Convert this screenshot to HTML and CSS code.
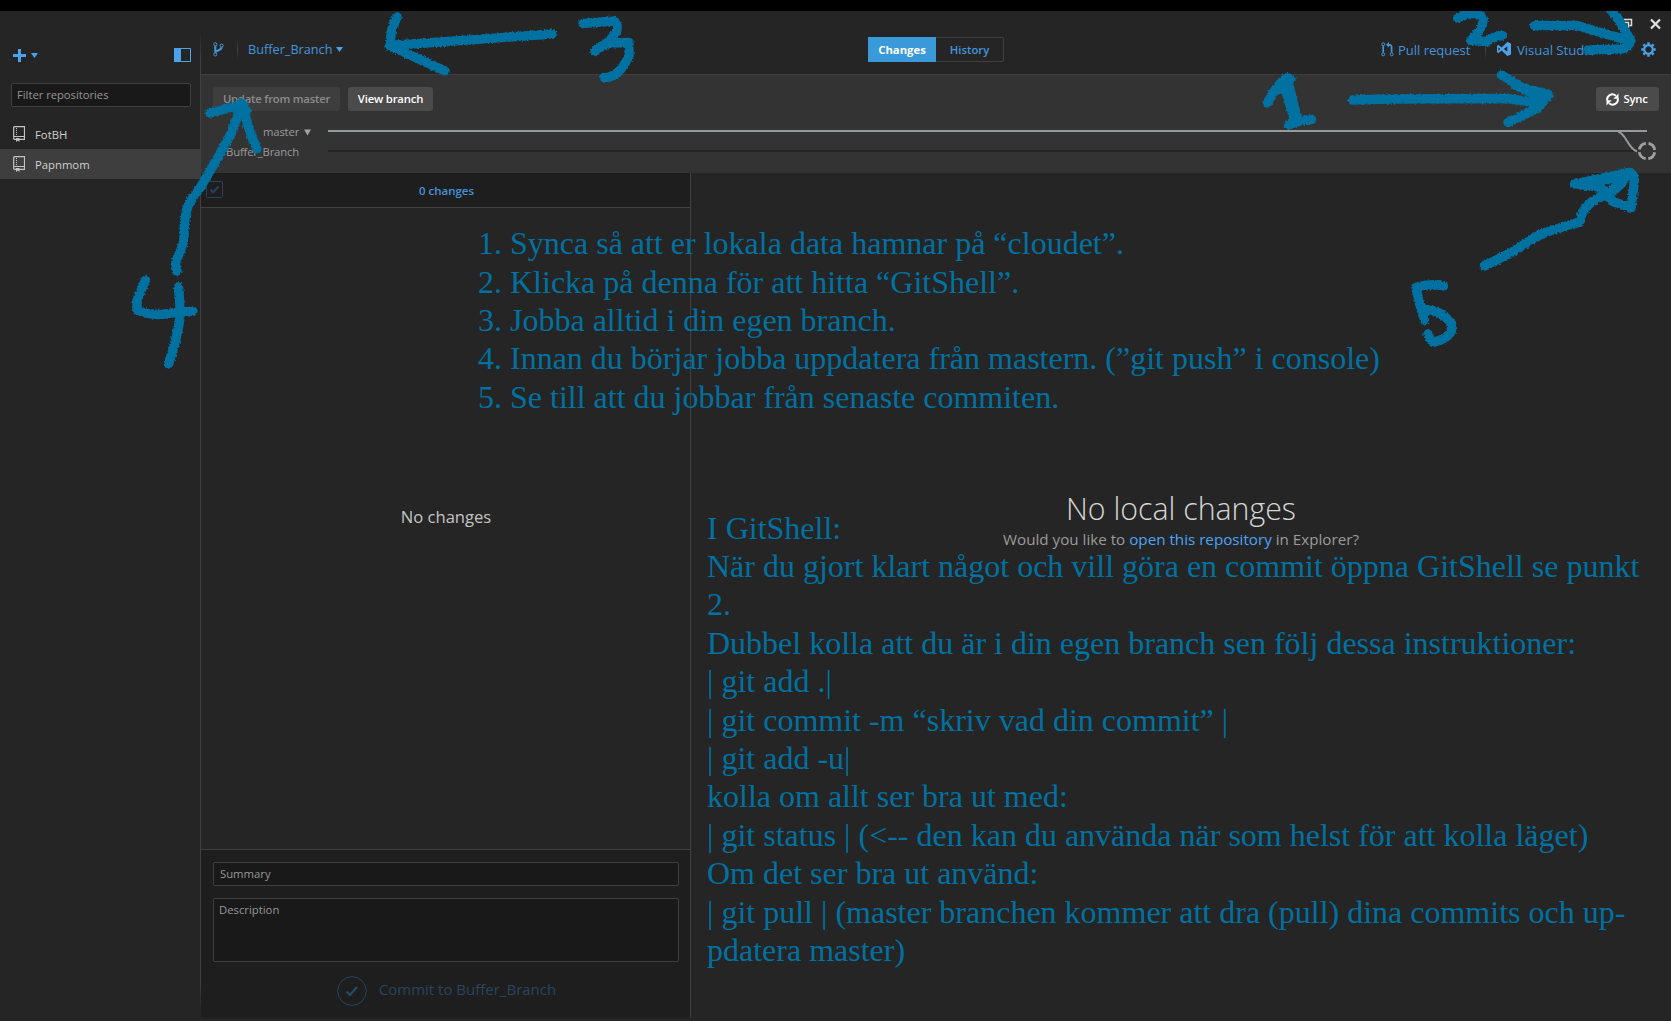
FILE: index.html
```html
<!DOCTYPE html>
<html lang="sv">
<head>
<meta charset="utf-8">
<title>GitHub</title>
<link rel="stylesheet" href="styles.css">
</head>
<body>
<div class="desktop">
  <div class="app">
    <aside class="sidebar">
      <div class="sidebar-tools">
        <span class="add"><svg width="13" height="13" viewBox="0 0 13 13"><path d="M5 0h3v5h5v3H8v5H5V8H0V5h5z" fill="#4ba3ea"/></svg><svg width="7" height="5" viewBox="0 0 7 5"><path d="M0 0h7L3.5 5z" fill="#4ba3ea"/></svg></span>
        <svg width="17" height="14" viewBox="0 0 17 14"><path d="M.5.5h16v13H.5z" fill="none" stroke="#4ba3ea"/><path d="M0 0h7v14H0z" fill="#4ba3ea"/></svg>
      </div>
      <div class="field filter">Filter repositories</div>
      <ul class="repos">
        <li><svg class="repo-icon" width="12" height="16" viewBox="0 0 12 16"><path d="M1.5.7h10v12.6h-10q-.8 0-.8-.8v-11q0-.8.8-.8M1 10.5h10.5" fill="none" stroke="#c4c4c4" stroke-width="1.2"/><path d="M3.5 2v7.5" stroke="#c4c4c4" stroke-dasharray="1 1"/><path d="M3 12h3.5v4l-1.7-1.5L3 16z" fill="#c4c4c4"/></svg><span>FotBH</span></li>
        <li class="selected"><svg class="repo-icon" width="12" height="16" viewBox="0 0 12 16"><path d="M1.5.7h10v12.6h-10q-.8 0-.8-.8v-11q0-.8.8-.8M1 10.5h10.5" fill="none" stroke="#c4c4c4" stroke-width="1.2"/><path d="M3.5 2v7.5" stroke="#c4c4c4" stroke-dasharray="1 1"/><path d="M3 12h3.5v4l-1.7-1.5L3 16z" fill="#c4c4c4"/></svg><span>Papnmom</span></li>
      </ul>
    </aside>

    <main class="main">
      <header class="header">
        <div class="branch">
          <svg width="11" height="15" viewBox="0 0 11 15"><g fill="none" stroke="#4494d6"><circle cx="2.3" cy="2.3" r="1.6"/><circle cx="2.3" cy="12.4" r="1.6"/><circle cx="8.6" cy="3.6" r="1.6"/><path d="M2.3 4v6.8M8.6 5.2c0 3.2-5 2.6-6 5" stroke-width="2.1"/></g></svg>
          <i class="divider"></i>
          <span class="branch-name">Buffer_Branch</span>
          <svg width="7" height="5" viewBox="0 0 7 5"><path d="M0 0h7L3.5 5z" fill="#4ba3ea"/></svg>
        </div>
        <div class="tabs"><span class="tab active">Changes</span><span class="tab">History</span></div>
        <div class="actions">
          <svg width="13" height="15" viewBox="0 0 13 15"><g fill="none" stroke="#4494d6"><circle cx="2.2" cy="2.3" r="1.5"/><circle cx="2.2" cy="12.3" r="1.5"/><circle cx="10.6" cy="12.3" r="1.5"/><path d="M2.2 4v6.6M10.6 10.6V5c0-1.5-.6-2.2-2.4-2.2H6.6" stroke-width="1.7"/></g><path d="M8 0v5.6L4.9 2.8z" fill="#4494d6"/></svg>
          <span class="pull">Pull request</span>
          <i class="divider"></i>
          <svg class="vs" width="14" height="14" viewBox="0 0 14 14"><path fill="#4ba3ea" fill-rule="evenodd" d="M10.3 0 14 1.4v11.2L10.3 14 4.7 8.5 1.4 11 0 10.3V3.7L1.4 3l3.3 2.5zM10.3 4.2 6.8 7l3.5 2.8zM1.4 5.3v3.4L3.2 7z"/></svg>
          <span class="studio">Visual Studio</span>
          <i class="divider"></i>
          <svg class="gear" width="15" height="15" viewBox="-7.5 -7.5 15 15"><circle r="4.3" fill="none" stroke="#4ba3ea" stroke-width="2.2"/><path d="M0-5v-2.2M0 5v2.2M-5 0h-2.2M5 0h2.2M-3.6-3.6l-1.5-1.5M3.6 3.6l1.5 1.5M-3.6 3.6l-1.5 1.5M3.6-3.6l1.5-1.5" stroke="#4ba3ea" stroke-width="2.5"/></svg>
        </div>
        <div class="window-buttons">
          <svg width="40" height="12" viewBox="0 0 40 12"><path d="M3.5 3.5V1.5h7v6h-2M1.5 4.5h6v5h-6z" fill="none" stroke="#ddd" stroke-width="1.5"/><path d="m30 1.5 9 9m0-9-9 9" stroke="#e2e2e2" stroke-width="2.2"/></svg>
        </div>
      </header>

      <section class="toolbar">
        <div class="buttons">
          <span class="button disabled">Update from master</span>
          <span class="button view">View branch</span>
          <span class="button sync"><svg width="13" height="13" viewBox="0 0 13 13"><path d="M1.3 7.6A5.1 5.1 0 0 1 9.8 2.8M11.7 5.4A5.1 5.1 0 0 1 3.2 10.2" fill="none" stroke="#fff" stroke-width="2"/><path d="M12.5.6v5.2H7.3zM.5 12.4V7.2h5.2z" fill="#fff"/></svg>Sync</span>
        </div>
        <div class="timeline">
          <div class="names">
            <span>master <svg width="7" height="7" viewBox="0 0 7 7"><path d="M0 .5h7L3.5 6.5z" fill="#a2a2a2"/></svg></span>
            <span>Buffer_Branch</span>
          </div>
          <svg class="graph" width="1340" height="44" viewBox="328 120 1340 44"><path d="M328 151h1307" stroke="#252525" stroke-width="2"/><path d="M328 131h1319" stroke="#959a9d" stroke-width="2"/><path d="M1618 131.500c8 2 10 17 19 20" fill="none" stroke="#959a9d" stroke-width="2"/><circle cx="1647" cy="151" r="7.800" fill="none" stroke="#a0a0a0" stroke-width="2.800" stroke-dasharray="9.600 2.650" stroke-dashoffset="-1.300"/></svg>
        </div>
      </section>

      <div class="content">
        <section class="changes">
          <div class="changes-head">
            <svg class="check" width="17" height="17" viewBox="0 0 17 17"><rect x=".5" y=".5" width="16" height="16" rx="1" fill="none" stroke="#28415a"/><path d="m4.500 8.500 2.500 3 5.500-6" fill="none" stroke="#28415a" stroke-width="2"/></svg>
            <b>0 changes</b>
          </div>
          <div class="changes-empty">No changes</div>
          <div class="commit">
            <div class="field summary">Summary</div>
            <div class="field description">Description</div>
            <div class="commit-button">
              <svg width="30" height="30" viewBox="0 0 30 30"><circle cx="15" cy="15" r="14.300" fill="none" stroke="#2a4158"/><path d="m9.500 15.500 3.500 3.500 7-8" fill="none" stroke="#2a4a68" stroke-width="2.200"/></svg>
              <span>Commit to Buffer_Branch</span>
            </div>
          </div>
        </section>
        <section class="detail">
          <h1>No local changes</h1>
          <p>Would you like to <a>open this repository</a> in Explorer?</p>
        </section>
      </div>
    </main>
  </div>

  <svg class="ink" width="1671" height="1021" viewBox="0 0 1671 1021">
    <defs><filter id="rough" x="0" y="0" width="1671" height="400" filterUnits="userSpaceOnUse" color-interpolation-filters="sRGB"><feTurbulence type="fractalNoise" baseFrequency=".5" numOctaves="2" seed="4"/><feDisplacementMap in="SourceGraphic" scale="3.500" xChannelSelector="R" yChannelSelector="G"/></filter></defs>
    <g filter="url(#rough)" fill="none" stroke="#0071a0" stroke-width="9.400" stroke-linecap="round" stroke-linejoin="round">
      <path d="M397 17Q389 30 391 46M552 34 440 42 389.500 45.500 445 71"/>
      <path d="M583 23.500 614 21Q619 26 616 33L608 42 595 51M597 49 610 43 629 42.500V56Q619 78 604 77.500"/>
      <path d="M1267.500 103Q1274 88 1287 77.500L1297 118M1279 90 1291 79M1284 84 1294 119M1288.500 125 1299 121 1311.500 119.500"/>
      <path d="M1352.500 100 1390 99 1507 98.500 1538 103M1501.500 75 1523 88 1549 94.500 1538 108 1508 122.500M1515 85 1544 99M1529 91 1540 93"/>
      <path d="M1457.500 18Q1477 9 1483 18 1485 25 1471 40.500L1487 41.500Q1494 36 1502 35.500"/>
      <path d="M1534.500 25.500H1577L1606 34 1630 41M1610 9 1619 20 1631 41Q1628 49 1621 49L1588 50"/>
      <path d="M177 271Q174 266 177 258 185 243 184 234 184 218 188 206 193 196 200 188L216.500 160 233 130 241 105 210 113M243 104Q247 128 257 149M241 103 247 111"/>
      <path d="M145.500 280 137 300V310Q153 317 171.500 313L193 311M178.500 287 180.500 313Q178 337 168.500 364"/>
      <path d="M1484.500 266 1513 251.500 1536.500 236.500Q1550 230 1580 222Q1582 204 1603 196L1620 184 1628 174M1574.500 184 1607 177 1628 172.500Q1636 173 1634 185L1631 208 1613 201.500 1600 187 1577 184M1592 182 1620 177M1598 187 1610 194 1622 183"/>
      <path d="M1443.500 286Q1429 283 1416 287.500L1419.500 303.500 1424.500 320M1424 310Q1438 308 1451.500 323V331.500Q1447 339 1433 342.500 1430 340 1428 334"/>
    </g>
  </svg>

  <ol class="note steps">
    <li>1. Synca så att er lokala data hamnar på “cloudet”.</li>
    <li>2. Klicka på denna för att hitta “GitShell”.</li>
    <li>3. Jobba alltid i din egen branch.</li>
    <li>4. Innan du börjar jobba uppdatera från mastern. (”git push” i console)</li>
    <li>5. Se till att du jobbar från senaste commiten.</li>
  </ol>
  <div class="note shell">I GitShell:<br>När du gjort klart något och vill göra en commit öppna GitShell se punkt<br>2.<br>Dubbel kolla att du är i din egen branch sen följ dessa instruktioner:<br>| git add .|<br>| git commit -m “skriv vad din commit” |<br>| git add -u|<br>kolla om allt ser bra ut med:<br>| git status | (&lt;-- den kan du använda när som helst för att kolla läget)<br>Om det ser bra ut använd:<br>| git pull | (master branchen kommer att dra (pull) dina commits och up-<br>pdatera master)</div>
</div>
</body>
</html>
```

FILE: styles.css
```css
* { box-sizing: border-box; }
body { margin: 0; background: #252525; color: #9b9b9b; font: 11.3px/16px "Open Sans", "Noto Sans", sans-serif; }
svg { display: block; flex: none; }
ul, ol, h1, p { margin: 0; padding: 0; list-style: none; }

.desktop { position: relative; width: 1671px; height: 1021px; overflow: hidden; border-top: 11px solid #000; }
.app { display: flex; height: 1007px; }

.sidebar { width: 201px; flex: none; padding-top: 37px; border-right: 1px solid; border-image: linear-gradient(#252525 20px, #404040 50px, #404040 970px, #252525 1000px) 1; }
.sidebar-tools { display: flex; justify-content: space-between; height: 14px; padding: 0 9px 0 13px; }
.add { display: flex; align-items: center; gap: 5px; padding-top: 1px; }
.field { border: 1px solid #3f3f3f; border-radius: 2px; background: #191919; color: #979797; }
.filter { height: 24px; margin: 21px 9px 12px 11px; padding: 3px 5px; font-size: 11.2px; }
.repos li { display: flex; align-items: center; gap: 10px; height: 30px; padding: 0 13px; color: #d0d0d0; }
.repos span { padding-top: 2px; }
.repos .selected { background: #3e3e3e; }

.main { flex: 1; display: flex; flex-direction: column; min-width: 0; }
.header { position: relative; display: flex; flex: none; align-items: flex-start; height: 64px; padding: 26px 15px 0 12px; border-bottom: 1px solid #3f3f3f; color: #4494dd; }
.branch { display: flex; align-items: center; width: 655px; height: 24px; }
.divider { width: 1px; height: 20px; background: linear-gradient(#252525, #454545, #252525); }
.branch .divider { margin: 0 10px 0 13px; }
.branch-name { margin-right: 4px; font-size: 12.7px; }
.tabs { display: flex; height: 25px; border: 1px solid #404040; border-radius: 2px; }
.tab { width: 67px; line-height: 23px; text-align: center; font-weight: 600; }
.tab.active { width: 68px; margin: -1px 0 -1px -1px; line-height: 25px; background: #3a99d9; color: #fff; font-weight: 700; }
.actions { display: flex; align-items: center; height: 24px; margin-left: auto; font-size: 13px; }
.pull { width: 91px; padding: 1px 0 0 4px; }
.vs { margin: 0 6px 0 11px; }
.studio { width: 103px; padding-top: 1px; font-size: 13.1px; }
.gear { margin: 0 0 0 20px; }
.window-buttons { position: absolute; top: 7px; right: 10px; }

.toolbar { flex: none; height: 98px; padding-top: 12px; background: #333; }
.buttons { display: flex; gap: 8px; padding: 0 12px; }
.button { display: flex; align-items: center; justify-content: center; height: 24px; border-radius: 3px; background: #4b4b4b; color: #fff; font-weight: 600; letter-spacing: -.17px; }
.button.disabled { width: 127px; background: #3e3e3e; color: #8b8b8b; letter-spacing: -.22px; }
.button.view { width: 85px; }
.button.sync { gap: 4px; width: 63px; margin-left: auto; padding-right: 1px; letter-spacing: -.2px; }
.timeline { display: flex; padding-top: 9px; }
.names { display: flex; flex-direction: column; width: 127px; padding: 2px 0 0 25px; line-height: 20px; letter-spacing: -.17px; }
.names span { display: flex; align-items: center; }
.names span:first-child { gap: 5px; padding-left: 37px; }

.content { display: flex; flex: 1; min-height: 0; }
.changes { display: flex; flex-direction: column; width: 490px; border-right: 1px solid #404040; }
.changes-head { display: flex; align-items: center; height: 35px; padding: 0 5px; border-bottom: 1px solid #404040; background: #1e1e1e; color: #4494dd; }
.changes-head b { flex: 1; padding: 1px 15px 0 0; text-align: center; font-size: 11.5px; font-weight: 600; }
.check { margin-top: -1px; }
.changes-empty { display: flex; flex: 1; align-items: center; justify-content: center; padding: 0 0 24px 1px; color: #c4c4c4; font-size: 16.6px; }
.commit { height: 169px; padding: 12px 11px 0 12px; border-top: 1px solid #404040; background: #1e1e1e; }
.summary { height: 24px; padding: 3px 6px; }
.description { height: 64px; margin-top: 12px; padding: 3px 5px; }
.commit-button { display: flex; align-items: center; justify-content: center; gap: 12px; padding: 14px 0 0 1px; color: #29455f; font-size: 15px; }
.commit-button span { padding-bottom: 4px; }

.detail { flex: 1; padding-top: 316px; text-align: center; }
.detail h1 { color: #d6d6d6; font-size: 30.3px; font-weight: 300; line-height: 40px; }
.detail p { font-size: 15.2px; line-height: 20px; }
.detail a { color: #4ba3f5; }

.ink, .note { position: absolute; pointer-events: none; }
.ink { top: -11px; left: 0; }
.note { color: #0071a0; font: 32px/38.4px "Liberation Serif", "Times New Roman", serif; white-space: nowrap; }
.steps { top: 213.2px; left: 478px; }
.shell { top: 497.5px; left: 707px; }
```
